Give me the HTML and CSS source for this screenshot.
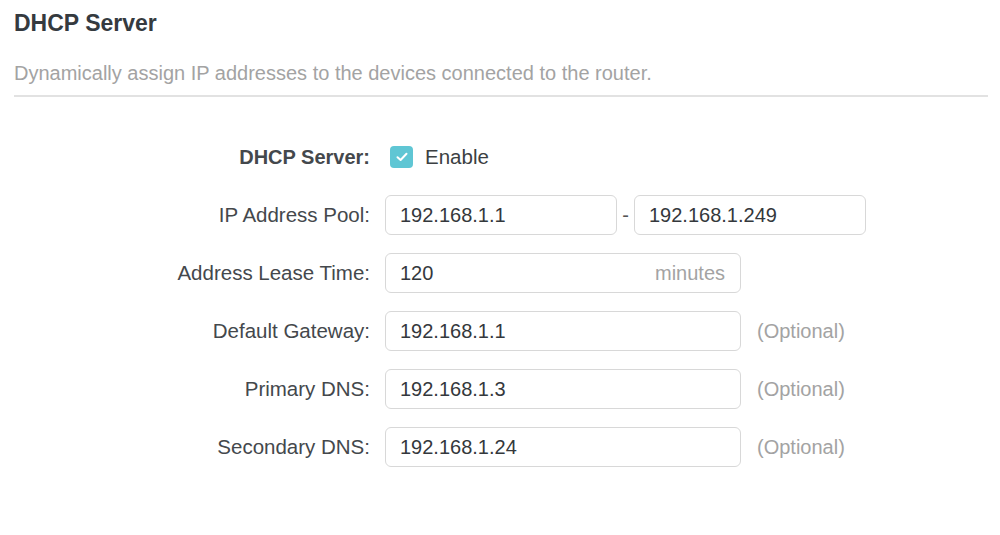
FILE: index.html
```html
<!DOCTYPE html>
<html lang="en">
<head>
    <meta charset="UTF-8">
    <meta name="viewport" content="width=device-width, initial-scale=1.0">
    <title>DHCP Server</title>
    <link rel="stylesheet" href="styles.css">
</head>
<body>
    <div id="page">
        <h2 id="title">DHCP Server</h2>
        <p id="desc">Dynamically assign IP addresses to the devices connected to the router.</p>

        <div id="form">
            <div class="row">
                <label class="label bold">DHCP Server:</label>
                <div class="check">
                    <span class="box">
                        <svg width="12" height="10" viewBox="0 0 12 10"><path d="M1.5 5.2 L4.6 8 L10.5 1.8" fill="none" stroke="#fff" stroke-width="2" stroke-linecap="round" stroke-linejoin="round"/></svg>
                    </span>
                    Enable
                </div>
            </div>
            <div class="row">
                <label class="label">IP Address Pool:</label>
                <div class="field half">192.168.1.1</div>
                <span class="dash">-</span>
                <div class="field half">192.168.1.249</div>
            </div>
            <div class="row">
                <label class="label">Address Lease Time:</label>
                <div class="field wide">120<span class="unit">minutes</span></div>
            </div>
            <div class="row">
                <label class="label">Default Gateway:</label>
                <div class="field wide">192.168.1.1</div>
                <span class="hint">(Optional)</span>
            </div>
            <div class="row">
                <label class="label">Primary DNS:</label>
                <div class="field wide">192.168.1.3</div>
                <span class="hint">(Optional)</span>
            </div>
            <div class="row">
                <label class="label">Secondary DNS:</label>
                <div class="field wide">192.168.1.24</div>
                <span class="hint">(Optional)</span>
            </div>
        </div>
    </div>
</body>
</html>
```

FILE: styles.css
```css
body{
    margin: 0;
    background: #fff;
    font-family: "Liberation Sans", Arial, sans-serif;
    color: #3c3f42;
}
#page{
    padding: 8px 12px 0 14px;
}
#title{
    margin: 0;
    font-size: 23px;
    line-height: 30px;
    font-weight: bold;
    color: #353a3f;
}
#desc{
    margin: 0;
    padding: 23px 0 10px 0;
    font-size: 20px;
    line-height: 24px;
    color: #a3a3a3;
    border-bottom: 2px solid #e2e2e2;
}
#form{
    display: flex;
    flex-direction: column;
    gap: 18px;
    padding-top: 40px;
}
.row{
    display: flex;
    align-items: center;
    height: 40px;
    font-size: 20px;
}
.label{
    width: 356px;
    text-align: right;
    margin-right: 15px;
    font-size: 20.5px;
    color: #44484c;
}
.bold{
    font-weight: bold;
    font-size: 20px;
}
.check{
    display: flex;
    align-items: center;
    gap: 12px;
    margin-left: 5px;
    font-size: 20.5px;
    color: #3c3f42;
}
.box{
    width: 23px;
    height: 22px;
    border-radius: 4px;
    background: #5fc6d4;
    display: flex;
    align-items: center;
    justify-content: center;
}
.field{
    box-sizing: border-box;
    height: 40px;
    border: 1px solid #d8d8d8;
    border-radius: 6px;
    padding: 0 15px 0 14px;
    display: flex;
    align-items: center;
    color: #34383c;
}
.half{
    width: 232px;
}
.wide{
    width: 356px;
}
.dash{
    width: 17px;
    text-align: center;
    color: #555;
}
.unit{
    margin-left: auto;
    color: #a3a3a3;
}
.hint{
    margin-left: 16px;
    color: #a3a3a3;
}
```
